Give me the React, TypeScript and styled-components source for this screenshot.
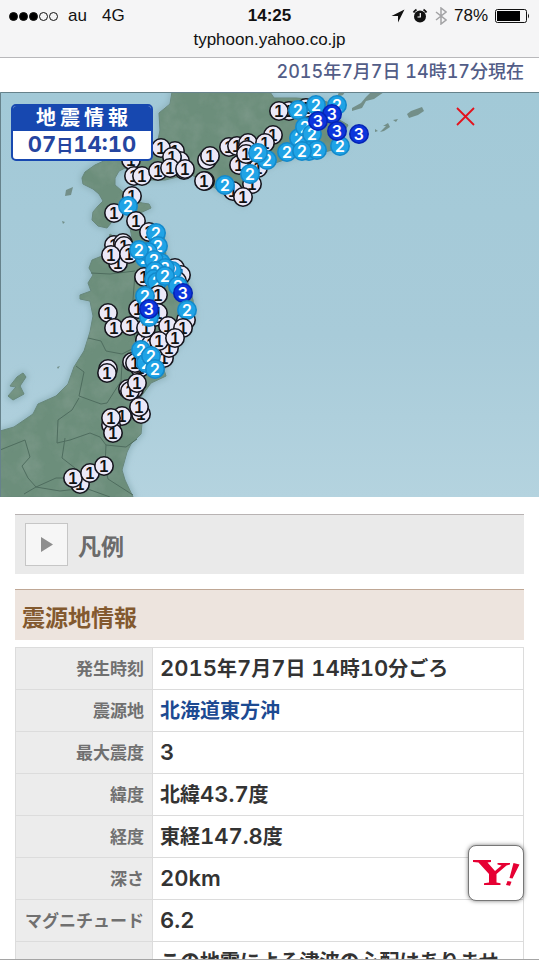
import React from 'react';
import styled, { createGlobalStyle } from 'styled-components';

const GlobalStyle = createGlobalStyle`
  *, *::before, *::after { box-sizing: border-box; }
  body {
    margin: 0;
    background: #fff;
    color: #333;
    font-family: Inter, "Noto Sans CJK JP", sans-serif;
    font-variant-numeric: tabular-nums;
    overflow: hidden;
  }
`;

const Screen = styled.div`
  position: relative;
  height: 100vh;
  overflow: hidden;
  background: #fff;
  border-bottom: 1px solid #a5a5a5;
`;

const BrowserBar = styled.header`
  height: 58px;
  padding: 4px 9px 0 9px;
  background: #f5f5f6;
  border-bottom: 1px solid #b8b8bb;
  color: #111;
  font-family: "Liberation Sans", Arial, sans-serif;
  font-size: 17px;
`;

const StatusRow = styled.div`
  display: grid;
  grid-template-columns: 1fr auto 1fr;
  align-items: center;
  height: 24px;
`;

const Carrier = styled.div`
  display: flex;
  align-items: center;
  gap: 15px;
`;

const Signal = styled.span`
  display: flex;
  gap: 1px;
  margin-right: -5px;
`;

const Dot = styled.span<{ $on: boolean }>`
  width: 9px;
  height: 9px;
  border: 1px solid #111;
  border-radius: 50%;
  background: ${(p) => (p.$on ? '#000' : 'transparent')};
`;

const Clock = styled.time`
  font-weight: 700;
`;

const Indicators = styled.div`
  display: flex;
  align-items: center;
  justify-content: flex-end;
  gap: 7px;
`;

const Address = styled.div`
  line-height: 24px;
  text-align: center;
`;

const AsOf = styled.p`
  margin: 0;
  height: 34px;
  padding-right: 15px;
  line-height: 27px;
  text-align: right;
  font-size: 18px;
  font-weight: 500;
  color: #525d87;
`;

const Latin = styled.span<{ $size: number; $weight: number }>`
  font-size: ${(p) => p.$size}px;
  font-weight: ${(p) => p.$weight};
`;

const MapFrame = styled.section`
  position: relative;
  overflow: hidden;
  line-height: 0;

  svg {
    width: 100%;
    height: auto;
    display: block;
  }
`;

const MapLabel = styled.div`
  position: absolute;
  top: 12px;
  left: 11px;
  width: 142px;
  border: 2px solid #1748b0;
  border-radius: 5px;
  overflow: hidden;
  background: #fff;
  text-align: center;
  font-weight: 700;
`;

const MapLabelTitle = styled.div`
  padding-left: 4px;
  background: #1748b0;
  color: #fff;
  font-size: 20px;
  line-height: 25px;
  letter-spacing: 4px;
`;

const MapLabelTime = styled.div`
  color: #2545a0;
  font-size: 17px;
  line-height: 26px;
`;

const Content = styled.main`
  padding: 17px 15px 0 15px;
`;

const LegendToggle = styled.button`
  display: flex;
  align-items: center;
  gap: 10px;
  width: 100%;
  height: 60px;
  padding: 0 10px;
  border: 0;
  border-top: 1px solid #b8b3b3;
  background: #eaeaea;
  color: #6b6b6b;
  font: inherit;
  font-size: 23px;
  font-weight: 700;
`;

const ToggleMark = styled.span`
  display: grid;
  place-items: center;
  width: 43px;
  height: 43px;
  border: 1px solid #c6c6c6;
  background: #f6f6f6;
`;

const SectionTitle = styled.h2`
  margin: 15px 0 7px;
  padding: 11px 7px 5px;
  border-top: 1px solid #bfa795;
  background: #ede4de;
  color: #83592f;
  font-size: 23px;
  font-weight: 700;
  line-height: 34px;
`;

const DataTable = styled.table`
  width: 100%;
  table-layout: fixed;
  border-collapse: collapse;

  th, td {
    height: 42px;
    padding: 6px 8px 6px 7px;
    border: 1px solid #dcdcdc;
    line-height: 28px;
    font-weight: 700;
  }
`;

const Label = styled.th`
  width: 137px;
  background: #ececec;
  color: #707070;
  font-size: 17px;
  text-align: right;
  white-space: nowrap;
`;

const Value = styled.td`
  color: #333;
  font-size: 20px;
  text-align: left;
`;

const AreaLink = styled.a`
  color: #1c4a92;
  text-decoration: none;
`;

const HomeButton = styled.button`
  position: absolute;
  right: 15px;
  bottom: 58px;
  display: grid;
  place-items: center;
  width: 56px;
  height: 56px;
  padding: 0;
  border: 1px solid #777;
  border-radius: 8px;
  background: #fff;
  box-shadow: 0 0 4px rgba(0, 0, 0, 0.5);
`;

function Mixed({ text, size, weight = 600 }: { text: string; size: number; weight?: number }) {
  return (
    <>
      {text.split(/([\x20-\x7e]+)/).map((part, i) =>
        i % 2 ? <Latin key={i} $size={size} $weight={weight}>{part}</Latin> : part,
      )}
    </>
  );
}

type Point = [x: number, y: number, level: 1 | 2 | 3];

const POINTS: Point[] = [
  [131, 160, 1], [175, 151, 1], [161, 148, 1], [180, 161, 1], [172, 157, 1],
  [134, 176, 1], [142, 176, 1], [158, 171, 1], [184, 170, 1], [170, 168, 1], [185, 169, 1],
  [207, 160, 1], [210, 156, 1], [205, 181, 1], [204, 181, 1],
  [229, 147, 1], [237, 146, 1], [248, 143, 1], [239, 165, 1], [258, 168, 1],
  [247, 150, 1], [246, 154, 1], [273, 135, 1], [265, 143, 1],
  [252, 184, 1], [233, 191, 1], [243, 197, 1],
  [289, 111, 1], [279, 111, 1], [306, 108, 1],
  [267, 160, 2], [258, 153, 2], [250, 174, 2], [225, 185, 2],
  [298, 110, 2], [316, 105, 2], [337, 105, 2], [299, 138, 2], [305, 127, 2], [312, 134, 2],
  [287, 152, 2], [309, 151, 2], [317, 150, 2], [302, 151, 2], [340, 146, 2],
  [332, 114, 3], [318, 121, 3], [337, 131, 3], [359, 134, 3],
  [132, 196, 1], [114, 213, 1], [128, 206, 2], [136, 221, 1],
  [149, 232, 1], [156, 233, 2], [158, 246, 2],
  [114, 245, 1], [123, 243, 1], [124, 246, 1], [118, 263, 1], [111, 255, 1], [129, 254, 1],
  [145, 258, 2], [148, 252, 2], [139, 250, 2], [161, 263, 2], [154, 260, 2],
  [144, 277, 1], [175, 268, 1], [181, 275, 1], [177, 281, 1],
  [172, 271, 2], [165, 268, 2], [155, 271, 2], [154, 279, 2], [157, 282, 2], [165, 276, 2],
  [158, 295, 1], [138, 309, 1], [145, 296, 2], [178, 286, 2], [183, 293, 3],
  [186, 320, 1], [187, 310, 2],
  [108, 313, 1], [155, 317, 1], [158, 313, 1],
  [145, 340, 1], [151, 344, 1], [114, 328, 1], [130, 326, 1], [146, 328, 1],
  [149, 317, 2], [149, 309, 3],
  [168, 326, 1], [183, 328, 1], [164, 358, 1], [169, 348, 1], [159, 341, 1], [175, 338, 1],
  [132, 362, 1], [140, 368, 1], [135, 363, 1],
  [141, 350, 2], [146, 363, 2], [151, 356, 2], [155, 369, 2],
  [108, 369, 1], [107, 373, 1],
  [128, 389, 1], [134, 389, 1], [130, 391, 1], [137, 383, 1],
  [141, 414, 1], [139, 407, 1], [122, 416, 1], [111, 425, 1], [113, 433, 1], [111, 418, 1],
  [80, 484, 1], [73, 478, 1], [90, 473, 1], [104, 466, 1],
];

// A digit is skipped when a later marker sits almost exactly on top of it.
const isBuried = (index: number) =>
  POINTS.slice(index + 1).some(
    ([x, y]) => Math.hypot(x - POINTS[index][0], y - POINTS[index][1]) < 6,
  );

const PALETTE = {
  1: { fill: '#ebe8f7', edge: '#15151d', text: '#111' },
  2: { fill: '#1fa3e6', edge: '#1389cb', text: '#fff' },
  3: { fill: '#0c35dc', edge: '#0524b4', text: '#fff' },
};

const LAND =
  'M172 92 L170 104 159 113 160 130 157 146 138 155 118 158 106 160 95 165 85 172 82 178 83 184 93 189 99 194 103 201 98 206 93 212 92 220 98 226 107 228 111 223 113 218 122 214 140 213 151 208 149 204 142 203 132 199 126 195 122 191 115 185 115 178 119 171 125 168 140 180 165 180 190 174 208 184 226 194 243 205 250 198 251 184 257 174 272 164 296 156 325 152 345 146 344 132 348 125 336 118 334 104 320 100 296 98 274 98 270 92Z' +
  'M110 234 L107 244 102 256 92 260 89 268 93 275 88 283 91 291 80 295 80 299 90 301 93 316 90 332 84 351 74 367 68 384 56 396 38 404 33 414 14 427 0 431 0 497 133 497 125 480 122 470 127 452 131 444 141 434 143 412 140 398 151 383 166 376 164 370 174 352 184 337 194 318 193 300 186 276 166 256 164 235 153 226 139 227 130 228 132 238 126 240 116 238Z' +
  'M23 373 L17 377 10 386 16 387 8 396 13 400 24 394 20 386 26 377Z';

const ISLANDS =
  'M352 111 L362 108 366 101 374 99 384 92 371 92 366 97 361 103 352 108Z' +
  'M407 114 L411 111 422 107 424 111 418 115 409 118Z' +
  'M339 92 L345 92 343 95 337 97Z' +
  'M380 132 L386 126 383 126 388 123 390 127 384 131Z M375 129 L378 131 375 132Z M393 120 L398 119 396 122Z' +
  'M66 190 L73 187 71 195 65 196Z M62 221 L65 222 63 224Z M57 367 L60 366 58 369Z';

const BORDERS =
  'M91 273 L110 274 135 271 M135 273 L133 300 129 320 136 340 134 355 M88 338 L101 341 106 351 122 354 134 348 M76 366 L84 372 79 396 101 404 107 403 121 381 122 364 M79 398 L72 410 58 420 57 443 70 440 90 433 100 437 106 445 126 447 137 439 M106 445 L105 466 108 479 133 495 M65 438 L62 458 75 468 76 478 56 478 36 487 M0 450 L25 440 30 457 22 466 28 478 36 487 24 494 M36 487 L60 491 85 488 110 497';

function QuakeMap() {
  return (
    <svg viewBox="0 92 539 405" role="img" aria-label="震度分布図">
      <defs>
        <linearGradient id="sea" x1="0" y1="0" x2="0" y2="1">
          <stop offset="0" stopColor="#a2c9d7" />
          <stop offset="0.6" stopColor="#a8cbd9" />
          <stop offset="1" stopColor="#b4d3df" />
        </linearGradient>
        <filter id="coast" x="-5%" y="-5%" width="110%" height="110%">
          <feGaussianBlur stdDeviation="3" />
        </filter>
        <filter id="relief" x="0" y="0" width="100%" height="100%">
          <feTurbulence type="fractalNoise" baseFrequency="0.05" numOctaves="4" seed="4" />
          <feColorMatrix values="0 0 0 0 0.25  0 0 0 0 0.36  0 0 0 0 0.3  1.6 0 0 0 -0.6" />
        </filter>
        <clipPath id="land">
          <path d={LAND} />
        </clipPath>
      </defs>
      <rect y="92" width="539" height="405" fill="url(#sea)" />
      <path d={LAND} fill="#8fb3bd" stroke="#8fb3bd" strokeWidth="4" filter="url(#coast)" />
      <path d={LAND} fill="#6c8e7b" stroke="#66867a" strokeLinejoin="round" />
      <rect y="92" width="350" height="405" clipPath="url(#land)" filter="url(#relief)" opacity="0.6" />
      <path d={ISLANDS} fill="#738f89" />
      <path d={BORDERS} fill="none" stroke="#4f6d5f" strokeLinejoin="round" />
      <path d="M0.500 497 V92.500 H539" fill="none" stroke="#66828b" />
      {POINTS.map(([x, y, level], i) => (
        <g key={i}>
          <circle cx={x} cy={y} r="9.2" fill={PALETTE[level].fill} stroke={PALETTE[level].edge} strokeWidth="1.6" />
          {!isBuried(i) && (
            <text
              x={x}
              y={y + 6}
              textAnchor="middle"
              fontFamily="Inter, sans-serif"
              fontSize="16"
              fontWeight="600"
              fill={PALETTE[level].text}
            >
              {level}
            </text>
          )}
        </g>
      ))}
      <path d="M457 108 L474 125 M474 108 L457 125" stroke="#e3121c" strokeWidth="1.8" />
    </svg>
  );
}

const ROWS: [string, React.ReactNode][] = [
  ['発生時刻', <Mixed text="2015年7月7日 14時10分ごろ" size={22} />],
  ['震源地', <AreaLink href="#area">北海道東方沖</AreaLink>],
  ['最大震度', <Mixed text="3" size={22} />],
  ['緯度', <Mixed text="北緯43.7度" size={22} />],
  ['経度', <Mixed text="東経147.8度" size={22} />],
  ['深さ', <Mixed text="20km" size={22} />],
  ['マグニチュード', <Mixed text="6.2" size={22} />],
  ['', 'この地震による津波の心配はありません。'],
];

export default function App() {
  return (
    <Screen>
      <GlobalStyle />
      <BrowserBar>
        <StatusRow>
          <Carrier>
            <Signal>
              {[true, true, true, false, false].map((on, i) => (
                <Dot key={i} $on={on} />
              ))}
            </Signal>
            <span>au</span>
            <span>4G</span>
          </Carrier>
          <Clock>14:25</Clock>
          <Indicators>
            <svg width="14" height="14" viewBox="0 0 14 14">
              <path d="M13.500 0.500 L0.500 7 H7 V13.500Z" fill="#111" />
            </svg>
            <svg width="16" height="16" viewBox="0 0 16 16">
              <circle cx="8" cy="8.500" r="6" fill="#111" />
              <path d="M1.500 4.500 A8 8 0 0 1 4.500 1.600 M11.500 1.600 A8 8 0 0 1 14.500 4.500" stroke="#111" strokeWidth="1.800" fill="none" />
              <path d="M8.300 5 V9 H5.500" stroke="#fff" strokeWidth="1.200" fill="none" />
            </svg>
            <svg width="12" height="18" viewBox="0 0 12 18">
              <path d="M1 5 L11 13 L6 17 V1 L11 5 L1 13" stroke="#a3a3a5" strokeWidth="1.500" fill="none" />
            </svg>
            <span>78%</span>
            <svg width="35" height="14" viewBox="0 0 35 14">
              <rect x="0.500" y="0.500" width="31" height="13" rx="2" fill="none" stroke="#111" />
              <rect x="2" y="2" width="23" height="10" fill="#000" />
              <path d="M33 4.500 Q35 7 33 9.500Z" fill="#111" />
            </svg>
          </Indicators>
        </StatusRow>
        <Address>typhoon.yahoo.co.jp</Address>
      </BrowserBar>

      <AsOf>
        <Mixed text="2015年7月7日 14時17分現在" size={18} weight={500} />
      </AsOf>

      <MapFrame>
        <QuakeMap />
        <MapLabel>
          <MapLabelTitle>地震情報</MapLabelTitle>
          <MapLabelTime>
            <Mixed text="07日14:10" size={22} weight={700} />
          </MapLabelTime>
        </MapLabel>
      </MapFrame>

      <Content>
        <LegendToggle type="button" aria-expanded="false">
          <ToggleMark>
            <svg width="12" height="15" viewBox="0 0 12 15">
              <path d="M0 0 L12 7.500 L0 15Z" fill="#8e8e8e" />
            </svg>
          </ToggleMark>
          凡例
        </LegendToggle>

        <SectionTitle>震源地情報</SectionTitle>
        <DataTable>
          <tbody>
            {ROWS.map(([label, value], i) => (
              <tr key={i}>
                <Label scope="row">{label}</Label>
                <Value>{value}</Value>
              </tr>
            ))}
          </tbody>
        </DataTable>
      </Content>

      <HomeButton type="button" aria-label="Yahoo! JAPAN">
        <svg width="47" height="26" viewBox="0 0 47 26">
          <path
            d="M0 0 H18 V2 L14.500 2.600 L22 11 L28.500 5.400 L24.500 4.600 V3 H37 V4.600 L33.500 5.400 L23.500 14 V22.500 L27.500 23.200 V25 H11 V23.200 L16 22.500 V14 L5.500 2.600 L0 2Z"
            fill="#e60033"
          />
          <path d="M40.500 3 L46.500 4.500 L39.500 18.500 L36.500 18Z M34.500 21 L38.500 21.800 L37 25.800 L33 25Z" fill="#e60033" />
        </svg>
      </HomeButton>
    </Screen>
  );
}
